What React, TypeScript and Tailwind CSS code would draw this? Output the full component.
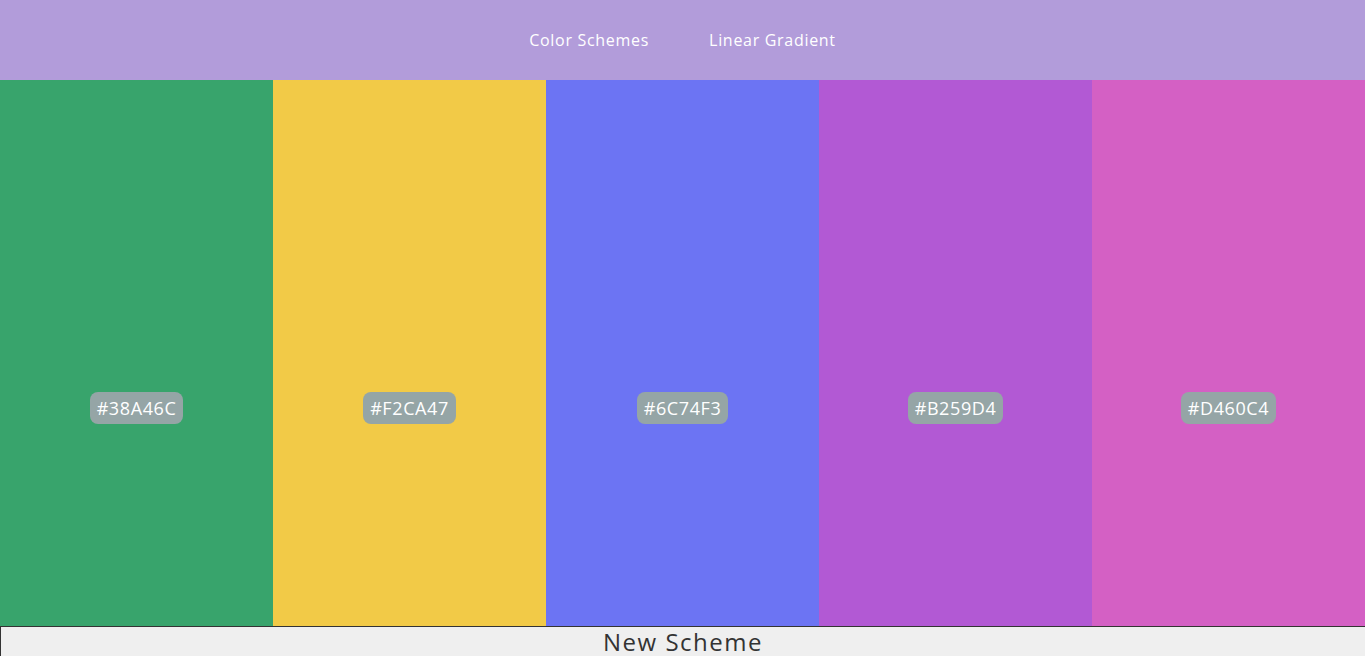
const colors = ["#38A46C", "#F2CA47", "#6C74F3", "#B259D4", "#D460C4"];

export default function App() {
  return (
    <div className="font-['Open_Sans',sans-serif]">
      <nav className="h-20 bg-[#b29cda] flex items-center justify-center gap-[60px] text-white text-base tracking-[0.7px]">
        <a className="cursor-pointer">Color Schemes</a>
        <a className="cursor-pointer">Linear Gradient</a>
      </nav>
      <div className="flex h-[546px]">
        {colors.map((c) => (
          <div
            key={c}
            className="flex-1 flex items-center justify-center pt-[110px]"
            style={{ backgroundColor: c }}
          >
            <span className="bg-[#95a5a6] text-white text-[18px] tracking-[0.6px] px-[7px] py-[3px] rounded-lg leading-[26px]">
              {c}
            </span>
          </div>
        ))}
      </div>
      <button className="w-full h-[30px] bg-[#efefef] border-t border-l border-[#333] text-[#333] text-[24px] tracking-[1.5px] leading-[30px] flex items-center justify-center">
        New Scheme
      </button>
    </div>
  );
}
